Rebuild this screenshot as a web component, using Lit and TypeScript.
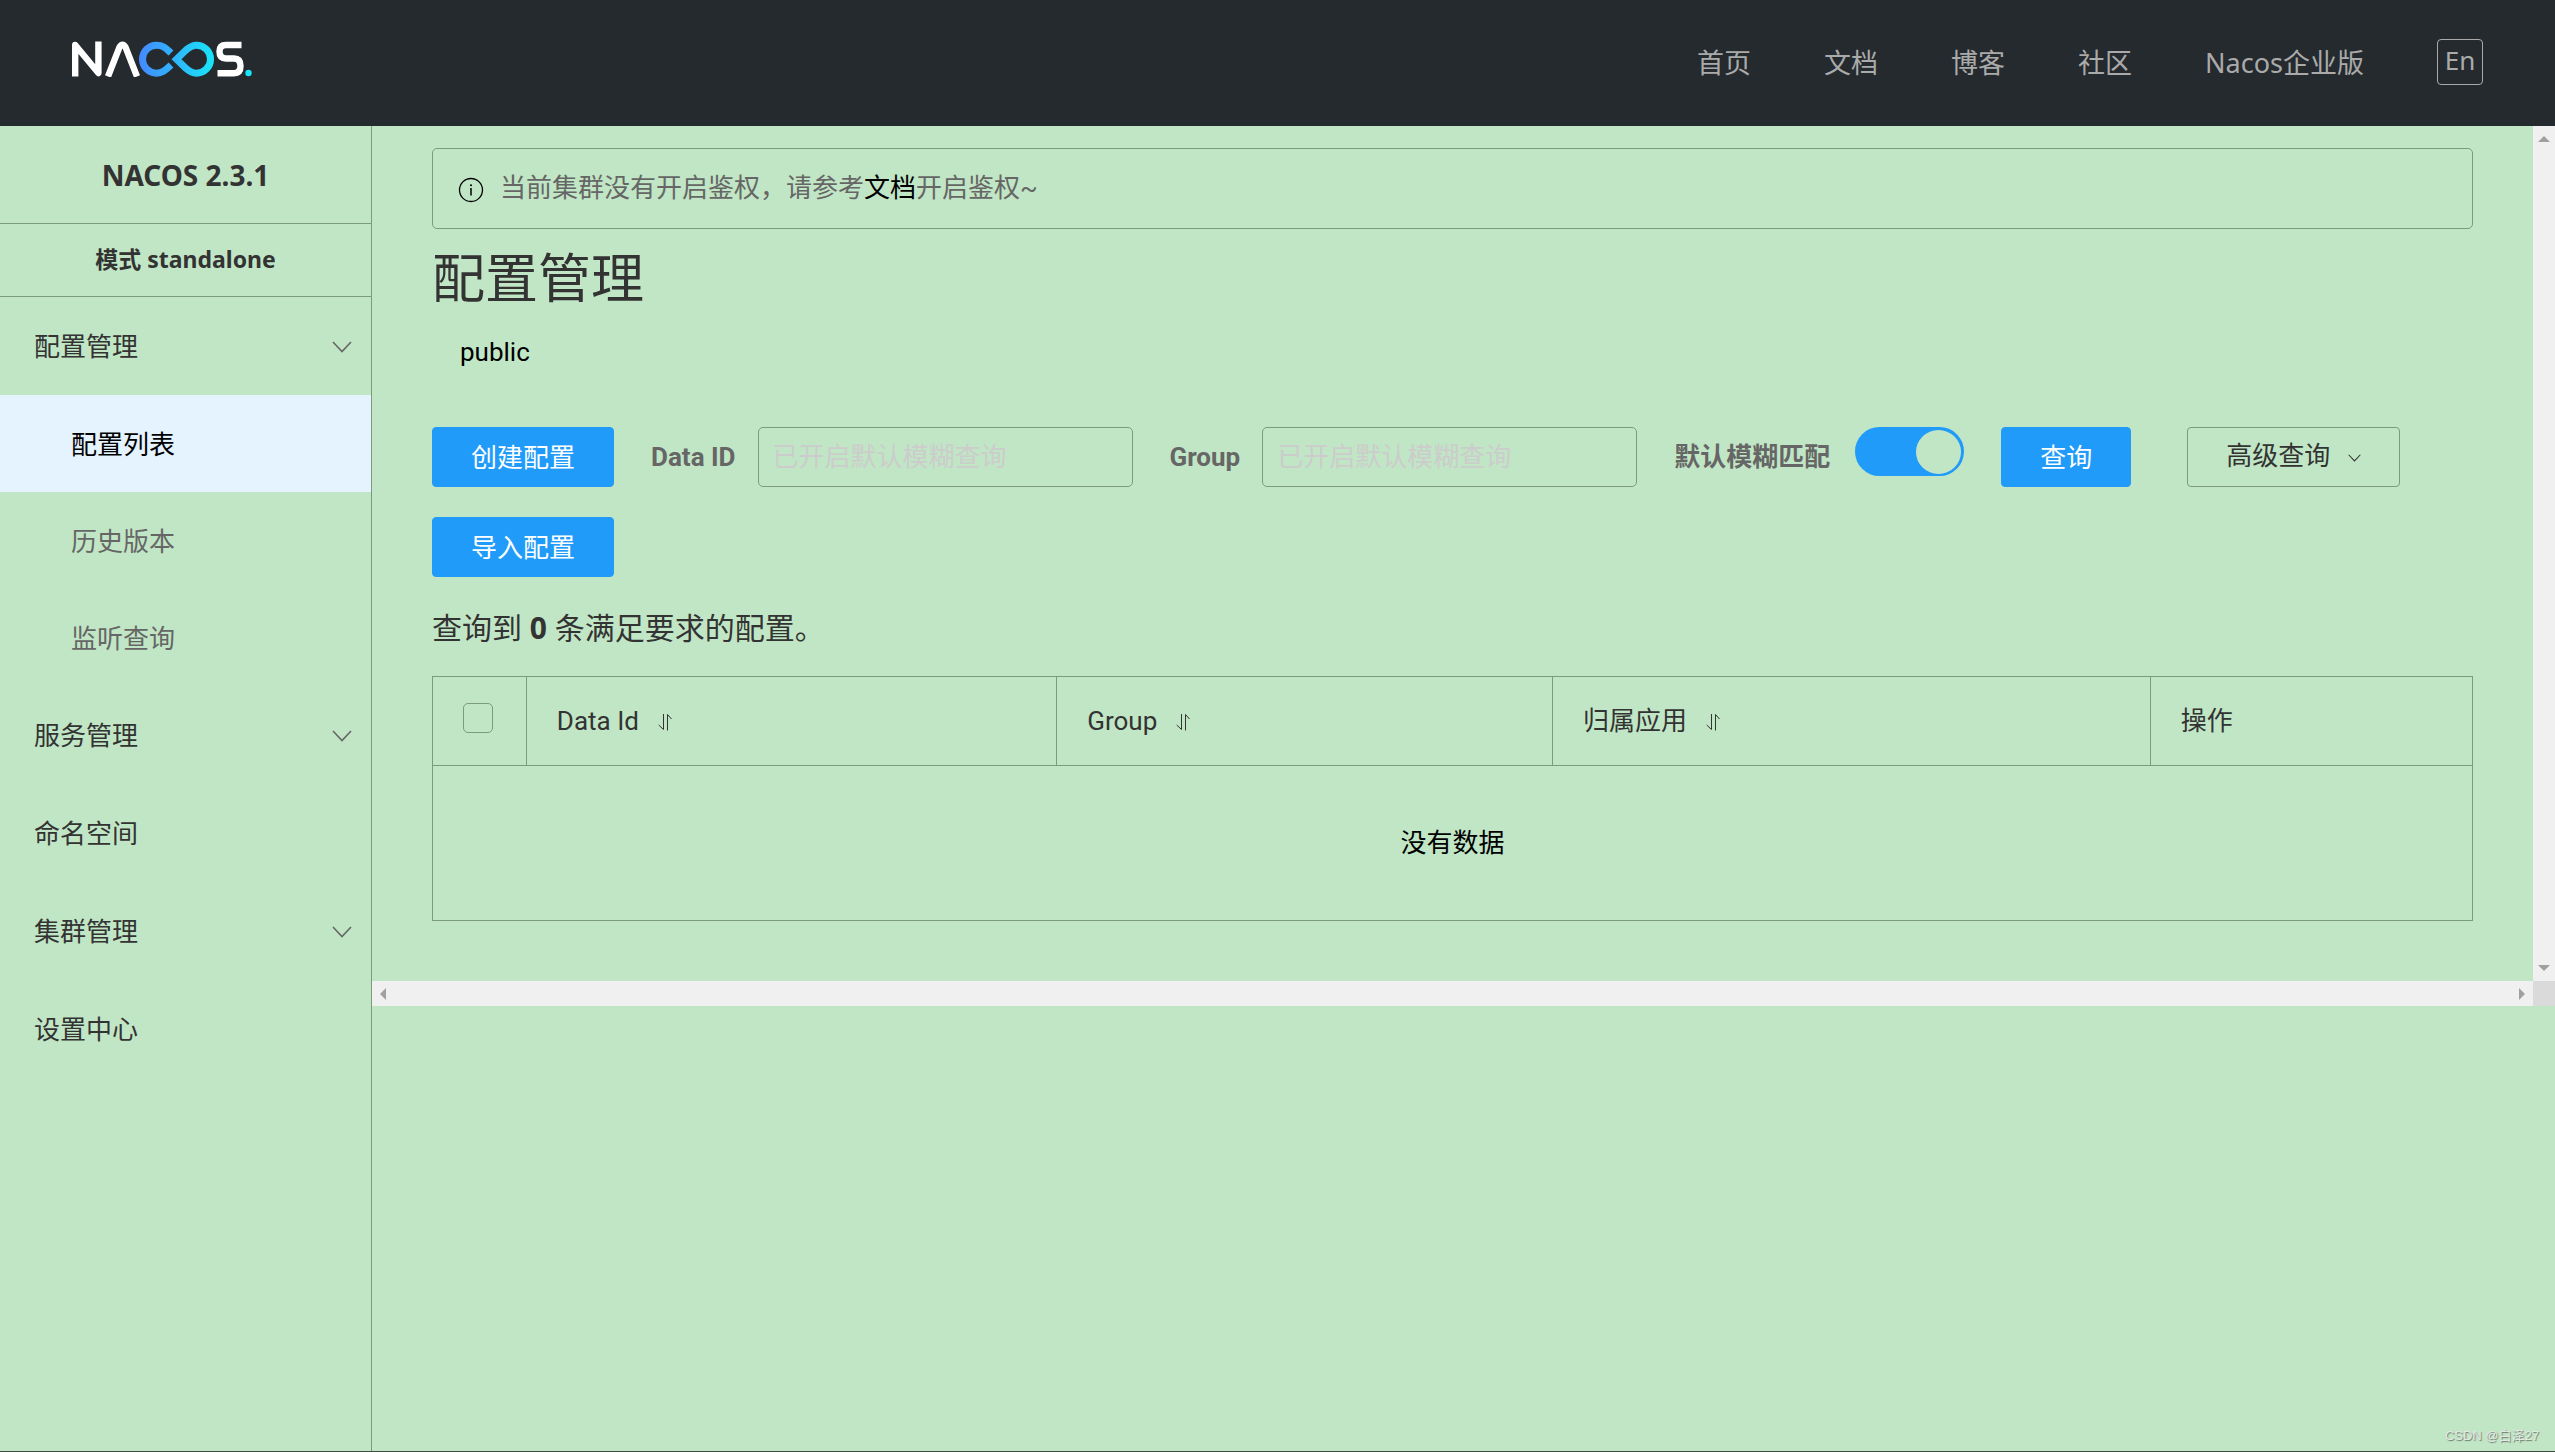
import { LitElement, html, svg, css } from "lit";
import { customElement, state } from "lit/decorators.js";

const chevron = (cls: string) => html`
  <svg class=${cls} viewBox="0 0 20 12" aria-hidden="true">
    <path d="M1 1 L10 10.5 L19 1" fill="none" stroke="currentColor" stroke-width="1.6" />
  </svg>
`;

const sortIcon = html`
  <svg class="sort-icon" viewBox="0 0 14 18" aria-hidden="true">
    <path d="M5.5 1 V16.500 L0.700 12 M9.500 17.500 V1.500 L13.500 6" fill="none" stroke="currentColor" stroke-width="1" />
  </svg>
`;

const logo = html`
  <svg class="logo" viewBox="0 0 180 36" role="img" aria-label="Nacos">
    <defs>
      <linearGradient id="loop" gradientUnits="userSpaceOnUse" x1="67" y1="0" x2="142" y2="0">
        <stop offset="0" stop-color="#4489ff" />
        <stop offset="1" stop-color="#18e6f8" />
      </linearGradient>
    </defs>
    ${svg`
      <g fill="none" stroke="#fff" stroke-width="6.4" stroke-linejoin="round">
        <path d="M3.2 35.5 V4 L26.4 32 V0.5" />
        <path d="M36 35.5 L47.5 6.2 Q50.5 1.2 53.5 6.2 L65 35.5" />
        <path d="M169.500 4 H154 Q147.500 4 147.500 10.500 Q147.500 17.500 154 17.500 H162 Q168.500 17.500 168.500 25 Q168.500 32.300 162 32.300 H145.500" />
      </g>
      <g fill="none" stroke="url(#loop)" stroke-width="7">
        <path d="M99 12 C94 7.500 91 4.200 84.500 4.200 A14 14 0 1 0 84.500 32.200 C91 32.200 94 28.500 99 24" />
        <path d="M104.500 18.200 L114 9 C118 5.500 120 4.200 124.500 4.200 A14 14 0 0 1 124.500 32.200 C120 32.200 118 31 114 27.400 Z" />
      </g>
      <circle cx="176.500" cy="32" r="3.200" fill="#18e6f8" />
    `}
  </svg>
`;

interface MenuItem {
  label: string;
  children?: string[];
  expandable?: boolean;
}

const MENU: MenuItem[] = [
  { label: "配置管理", expandable: true, children: ["配置列表", "历史版本", "监听查询"] },
  { label: "服务管理", expandable: true },
  { label: "命名空间" },
  { label: "集群管理", expandable: true },
  { label: "设置中心" },
];

const NAV = ["首页", "文档", "博客", "社区", "Nacos企业版"];

@customElement("app-root")
export class AppRoot extends LitElement {
  @state() private active = "配置列表";
  @state() private fuzzy = true;

  static styles = css`
    :host {
      --page: #c1e6c5;
      --line: #7b9a80;
      --blue: #209bfa;
      --text: #333;
      --muted: #666;
      display: flex;
      flex-direction: column;
      min-height: 100vh;
      box-sizing: border-box;
      border-bottom: 1px solid #3e4c40;
      background: var(--page);
      color: var(--text);
      font-family: Roboto, "Noto Sans CJK SC", sans-serif;
      font-size: 26px;
      font-weight: 400;
      line-height: 38px;
    }
    * {
      box-sizing: border-box;
    }
    button,
    input {
      font: inherit;
      color: inherit;
      margin: 0;
    }
    a {
      color: inherit;
      text-decoration: none;
    }
    h1,
    h2,
    p,
    ul {
      margin: 0;
      padding: 0;
    }
    ul {
      list-style: none;
    }

    .header {
      display: flex;
      justify-content: space-between;
      align-items: center;
      height: 126px;
      padding: 0 72px;
      background: #252a2f;
      color: #aaa;
      font-family: "Noto Sans", "Noto Sans CJK SC", sans-serif;
      font-size: 27px;
    }
    .logo {
      display: block;
      width: 180px;
      height: 36px;
      margin-bottom: 8px;
    }
    .nav {
      display: flex;
      align-items: center;
      gap: 73px;
    }
    .lang {
      width: 46px;
      height: 46px;
      margin-bottom: 3px;
      padding: 0 0 4px;
      border: 1px solid #aaa;
      border-radius: 4px;
      background: none;
      font-size: 26px;
    }

    .body {
      flex: 1;
      display: flex;
      align-items: stretch;
    }
    .sidebar {
      flex: none;
      width: 372px;
      border-right: 1px solid var(--line);
    }
    .product,
    .mode {
      display: flex;
      align-items: center;
      justify-content: center;
      border-bottom: 1px solid var(--line);
      font-family: "Noto Sans", "Noto Sans CJK SC", sans-serif;
      font-weight: 700;
    }
    .product {
      height: 98px;
      font-size: 28px;
    }
    .mode {
      height: 73px;
      padding-bottom: 2px;
      font-size: 23px;
    }
    .item {
      display: flex;
      align-items: center;
      justify-content: space-between;
      width: 100%;
      height: 98px;
      padding: 2px 19px 0 34px;
      border: 0;
      background: none;
      text-align: left;
    }
    .sub {
      height: 97px;
      padding-left: 71px;
      color: var(--muted);
    }
    .sub.active {
      background: #e4f3fe;
      color: #000;
    }
    .arrow {
      width: 20px;
      height: 12px;
      color: var(--muted);
    }

    .main {
      flex: 1;
      min-width: 0;
    }
    .frame {
      display: grid;
      grid-template-columns: minmax(0, 1fr) 22px;
      grid-template-rows: auto 25px;
    }
    .content {
      padding: 22px 60px 60px;
    }
    .vbar,
    .hbar {
      display: flex;
      justify-content: space-between;
      align-items: center;
      background: #f0f0f0;
    }
    .vbar {
      flex-direction: column;
      padding: 10px 0;
    }
    .hbar {
      padding: 0 8px;
    }
    .corner {
      background: #dadada;
    }
    .tri {
      display: block;
      fill: #a0a0a0;
    }
    .tri-v {
      width: 12px;
      height: 6px;
    }
    .tri-h {
      width: 6px;
      height: 12px;
    }

    .notice {
      display: flex;
      align-items: center;
      gap: 16px;
      height: 81px;
      padding: 0 25px 2px;
      border: 1px solid var(--line);
      border-radius: 5px;
      color: var(--muted);
    }
    .notice a {
      color: #000;
    }
    .info {
      flex: none;
      width: 26px;
      height: 26px;
      margin-top: 4px;
      color: #000;
    }
    .title {
      margin-top: 12px;
      font-size: 53px;
      line-height: 78px;
      font-weight: 400;
    }
    .namespace {
      padding: 14px 28px 0;
      color: #000;
    }

    .filters {
      display: flex;
      flex-wrap: wrap;
      align-items: center;
      gap: 30px 37px;
      margin-top: 56px;
    }
    .field {
      display: flex;
      align-items: center;
      gap: 22px;
      color: var(--muted);
      font-weight: 700;
    }
    .input {
      width: 375px;
      height: 60px;
      padding: 0 14px;
      border: 1px solid var(--line);
      border-radius: 5px;
      background: none;
      font-weight: 400;
      outline: none;
    }
    .input::placeholder {
      color: #ccc;
      opacity: 1;
    }
    .btn {
      height: 60px;
      padding: 2px 38px 0;
      border: 1px solid var(--blue);
      border-radius: 4px;
      background: var(--blue);
      color: #fff;
    }
    .more {
      display: flex;
      align-items: center;
      gap: 18px;
      margin-left: 19px;
      padding: 0 38px 2px;
      border-color: var(--line);
      background: none;
      color: var(--text);
    }
    .more-arrow {
      width: 13px;
      height: 8px;
      margin-top: 4px;
    }
    .switch {
      appearance: none;
      display: flex;
      align-self: flex-start;
      align-items: center;
      width: 109px;
      height: 49px;
      padding: 0 3px;
      border-radius: 25px;
      background: var(--line);
    }
    .switch:checked {
      justify-content: flex-end;
      background: var(--blue);
    }
    .switch::before {
      content: "";
      width: 45px;
      height: 44px;
      border-radius: 50%;
      background: var(--page);
    }
    .field.top {
      gap: 25px;
      height: 60px;
    }

    .import {
      margin-top: 30px;
    }
    .summary {
      margin-top: 30px;
      font-family: "Noto Sans", "Noto Sans CJK SC", sans-serif;
      font-size: 30px;
      line-height: 42px;
    }
    .summary strong {
      font-weight: 700;
    }

    .table {
      width: 100%;
      margin-top: 27px;
      border-collapse: collapse;
      table-layout: fixed;
    }
    .table th,
    .table td {
      border: 1px solid var(--line);
      padding: 0 30px;
    }
    .table th {
      height: 89px;
      font-weight: 400;
      text-align: left;
    }
    .table td {
      height: 155px;
      color: #000;
      text-align: center;
    }
    .c-check { width: 4.6%; }
    .c-id { width: 26%; }
    .c-group { width: 24.3%; }
    .c-app { width: 29.3%; }
    .th {
      display: flex;
      align-items: center;
      gap: 19px;
    }
    .sort {
      padding: 2px 0 0;
      border: 0;
      background: none;
      display: flex;
    }
    .sort-icon {
      width: 14px;
      height: 18px;
    }
    .check {
      appearance: none;
      display: block;
      width: 30px;
      height: 30px;
      margin-bottom: 6px;
      border: 1px solid var(--line);
      border-radius: 5px;
    }

    .watermark {
      position: absolute;
      right: 16px;
      bottom: 6px;
      color: #e3e9e4;
      font-family: "Liberation Sans", "Noto Sans CJK SC", sans-serif;
      font-size: 13px;
      line-height: 20px;
      text-shadow: 1px 1px 1px #6d7a6f;
    }
  `;

  private renderMenu(item: MenuItem) {
    return html`
      <li>
        <button class="item">
          <span>${item.label}</span>
          ${item.expandable ? chevron("arrow") : ""}
        </button>
        ${item.children
          ? html`<ul>
              ${item.children.map(
                (c) => html`<li>
                  <button class="item sub ${c === this.active ? "active" : ""}" @click=${() => (this.active = c)}>${c}</button>
                </li>`
              )}
            </ul>`
          : ""}
      </li>
    `;
  }

  private renderSortable(label: string) {
    return html`<th scope="col">
      <div class="th"><span>${label}</span><button class="sort" aria-label="${label} 排序">${sortIcon}</button></div>
    </th>`;
  }

  render() {
    return html`
      <header class="header">
        <a href="#">${logo}</a>
        <nav class="nav">
          ${NAV.map((n) => html`<a href="#">${n}</a>`)}
          <button class="lang">En</button>
        </nav>
      </header>
      <div class="body">
        <aside class="sidebar">
          <h2 class="product">NACOS 2.3.1</h2>
          <p class="mode">模式&nbsp;standalone</p>
          <ul>
            ${MENU.map((m) => this.renderMenu(m))}
          </ul>
        </aside>
        <main class="main">
          <div class="frame">
            <div class="content">
              <div class="notice">
                <svg class="info" viewBox="0 0 26 26" aria-hidden="true">
                  <circle cx="13" cy="13" r="11.500" fill="none" stroke="currentColor" stroke-width="1.300" />
                  <path d="M13 11 V18.500" stroke="currentColor" stroke-width="1.500" />
                  <circle cx="13" cy="8.200" r="1" fill="currentColor" />
                </svg>
                <p>当前集群没有开启鉴权，请参考<a href="#">文档</a>开启鉴权~</p>
              </div>
              <h1 class="title">配置管理</h1>
              <p class="namespace">public</p>
              <div class="filters">
                <button class="btn">创建配置</button>
                <div class="field">
                  <label for="data-id">Data ID</label>
                  <input class="input" id="data-id" type="text" placeholder="已开启默认模糊查询" />
                </div>
                <div class="field">
                  <label for="group">Group</label>
                  <input class="input" id="group" type="text" placeholder="已开启默认模糊查询" />
                </div>
                <div class="field top">
                  <label for="fuzzy">默认模糊匹配</label>
                  <input class="switch" id="fuzzy" type="checkbox" role="switch" .checked=${this.fuzzy}
                    @change=${() => (this.fuzzy = !this.fuzzy)} />
                </div>
                <button class="btn">查询</button>
                <button class="btn more">高级查询 ${chevron("more-arrow")}</button>
              </div>
              <button class="btn import">导入配置</button>
              <p class="summary">查询到 <strong>0</strong> 条满足要求的配置。</p>
              <table class="table">
                <colgroup>
                  <col class="c-check" />
                  <col class="c-id" />
                  <col class="c-group" />
                  <col class="c-app" />
                  <col />
                </colgroup>
                <thead>
                  <tr>
                    <th scope="col"><input class="check" type="checkbox" aria-label="全选" /></th>
                    ${this.renderSortable("Data Id")} ${this.renderSortable("Group")} ${this.renderSortable("归属应用")}
                    <th scope="col">操作</th>
                  </tr>
                </thead>
                <tbody>
                  <tr><td colspan="5">没有数据</td></tr>
                </tbody>
              </table>
            </div>
            <div class="vbar" aria-hidden="true">
              <svg class="tri tri-v" viewBox="0 0 12 6"><path d="M0 6 L6 0 L12 6 Z" /></svg>
              <svg class="tri tri-v" viewBox="0 0 12 6"><path d="M0 0 L6 6 L12 0 Z" /></svg>
            </div>
            <div class="hbar" aria-hidden="true">
              <svg class="tri tri-h" viewBox="0 0 6 12"><path d="M6 0 L0 6 L6 12 Z" /></svg>
              <svg class="tri tri-h" viewBox="0 0 6 12"><path d="M0 0 L6 6 L0 12 Z" /></svg>
            </div>
            <div class="corner"></div>
          </div>
        </main>
      </div>
      <span class="watermark">CSDN @白泽27</span>
    `;
  }
}
